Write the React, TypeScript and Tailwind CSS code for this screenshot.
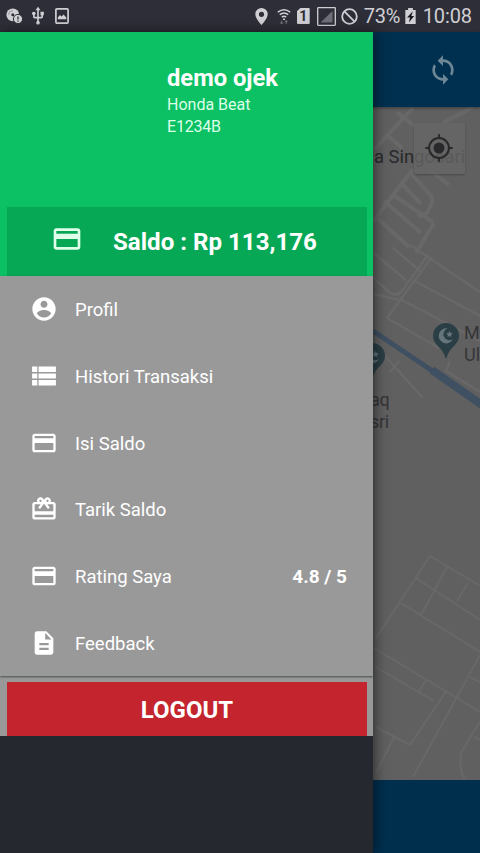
import type { ComponentType } from "react";
import {
  MdCardGiftcard,
  MdCreditCard,
  MdDescription,
  MdLoop,
  MdPlace,
  MdUsb,
} from "react-icons/md";

interface IconProps {
  className?: string;
}

interface MenuItem {
  label: string;
  icon: ComponentType<IconProps>;
  value?: string;
}

const AccountIcon = ({ className }: IconProps) => (
  <svg viewBox="0 0 24 24" fill="currentColor" className={className}>
    <path d="M12 2C6.48 2 2 6.48 2 12s4.48 10 10 10 10-4.48 10-10S17.52 2 12 2zm0 3c1.66 0 3 1.34 3 3s-1.34 3-3 3-3-1.34-3-3 1.34-3 3-3zm0 14.2c-2.5 0-4.71-1.28-6-3.22.03-1.99 4-3.08 6-3.08 1.99 0 5.97 1.09 6 3.08-1.29 1.94-3.5 3.22-6 3.22z" />
  </svg>
);

const ListIcon = ({ className }: IconProps) => (
  <svg viewBox="2.5 2 20 20" fill="currentColor" className={className}>
    <path d="M4 13.8h3.7v-3.6H4v3.6zm0 4.9h3.7v-3.9H4v3.9zM4 9.2h3.7V5.3H4v3.9zm4.6 4.6H21v-3.6H8.6v3.6zm0 4.9H21v-3.9H8.6v3.9zM8.6 5.3v3.9H21V5.3H8.6z" />
  </svg>
);

const menu: MenuItem[] = [
  { label: "Profil", icon: AccountIcon },
  { label: "Histori Transaksi", icon: ListIcon },
  { label: "Isi Saldo", icon: MdCreditCard },
  { label: "Tarik Saldo", icon: MdCardGiftcard },
  { label: "Rating Saya", icon: MdCreditCard, value: "4.8 / 5" },
  { label: "Feedback", icon: MdDescription },
];

const StatusBar = () => (
  <div className="flex h-8 shrink-0 items-center justify-between bg-[#2e2e38] pr-2 pl-[6px] text-[#cfcfd4]">
    <div className="flex items-center">
      <svg viewBox="0 0 17 16" className="h-4 w-[17px]">
        <circle cx="6.8" cy="6.8" r="6.4" fill="#cfcfd4" />
        <circle cx="6.8" cy="6.8" r="1.5" fill="#2e2e38" />
        <path d="M2.8 6.8a4 4 0 0 1 4-4" stroke="#8b8b93" fill="none" />
        <circle cx="12" cy="11" r="4.6" fill="#cfcfd4" stroke="#2e2e38" />
        <path d="M12 8.4v3.2M12 12.4v1.3" stroke="#2e2e38" strokeWidth="1.3" />
      </svg>
      <MdUsb className="ml-[5px] size-5" />
      <svg viewBox="0 0 14 16" className="ml-[7px] h-4 w-[14px]">
        <rect x="0.9" y="0.9" width="12.2" height="14.2" rx="1" fill="none" stroke="#cfcfd4" strokeWidth="1.7" />
        <path d="M2.8 11.3V9.5l2.2-2.4 1.6 1.5 2-2.1 2.7 3v1.8z" fill="#cfcfd4" />
      </svg>
    </div>
    <div className="flex items-center">
      <svg viewBox="0 0 13 17" className="h-[17px] w-[13px]">
        <path d="M6.5 0A6.2 6.2 0 0 0 .3 6.2C.3 10.500 6.500 17 6.500 17s6.200-6.500 6.200-10.800A6.200 6.200 0 0 0 6.500 0zm0 3.700a2.600 2.600 0 1 1 0 5.200 2.600 2.600 0 0 1 0-5.200z" fill="#cfcfd4" fillRule="evenodd" />
      </svg>
      <svg viewBox="0 0 14 17" className="ml-[9px] h-[17px] w-[14px]" fill="none" stroke="#cfcfd4" strokeWidth="1.5">
        <path d="M0.8 4.2q6.2-5 12.4 0M2.8 6.7q4.2-3.4 8.4 0M4.8 9.2q2.2-1.7 4.4 0" />
        <path d="M7 10.4v1.6" strokeWidth="2" />
        <path d="M4.6 12.5v3.5M3.2 14.4l1.4 1.6 1.4-1.6M9.2 16v-3.5M7.8 14.1l1.4-1.6 1.4 1.6" stroke="#777780" strokeWidth="1" />
      </svg>
      <span className="ml-[6px] flex h-4 w-[13px] items-center justify-center rounded-[1px] bg-[#cfcfd4] text-sm font-bold text-[#2e2e38] [clip-path:polygon(28%_0,100%_0,100%_100%,0_100%,0_22%)]">
        1
      </span>
      <svg viewBox="0 0 19 19" className="ml-[7px] size-[19px]">
        <rect x="0.7" y="0.7" width="17.6" height="17.6" rx="0.5" fill="none" stroke="#cfcfd4" strokeWidth="1.3" />
        <path d="M3.5 15.5L15.5 4v11.5z" fill="#70707a" />
      </svg>
      <svg viewBox="0 0 17 17" className="ml-[5px] size-[17px]" fill="none" stroke="#cfcfd4" strokeWidth="1.8">
        <circle cx="8.5" cy="8.5" r="7.3" />
        <path d="M3.4 3.4l10.2 10.2" />
      </svg>
      <span className="ml-[6px] w-[37px] text-[20px] leading-8 tracking-[-0.2px]">73%</span>
      <svg viewBox="0 0 11 17" className="ml-[4px] h-4 w-[11px]">
        <path d="M0 2h3V0h5v2h3v15H0z" fill="#cfcfd4" />
        <path d="M8 3.5L1.8 10.2h3.2L3.8 15.5l5.6-7H6.4z" fill="#17171d" />
      </svg>
      <span className="ml-[7px] text-[20px] leading-8 tracking-[-0.1px]">10:08</span>
    </div>
  </div>
);

const MosquePin = ({ className }: IconProps) => (
  <svg viewBox="0 0 26 36" className={className}>
    <path d="M13 0A13 13 0 0 0 0 13c0 8 8 11 11 18l2 5 2-5c3-7 11-10 11-18A13 13 0 0 0 13 0z" fill="#2a3f45" />
    <path d="M14.5 5.5a7.5 7.5 0 1 0 5.5 10.5A6 6 0 1 1 14.5 5.5z" fill="#66757a" />
    <path d="M16.5 8l1 2 2.2.3-1.6 1.6.4 2.2-2-1.1-2 1.1.4-2.2-1.6-1.6 2.2-.3z" fill="#66757a" />
  </svg>
);

const MapView = () => (
  <div className="relative flex-1 overflow-hidden bg-[#606060] text-[#29292b]">
    <svg viewBox="0 107 480 673" className="h-full w-full" fill="none" stroke="#686868" strokeWidth="2.5">
      <g strokeWidth="4">
        <path d="M374 150L413 108M397 112l17 14M386 134l16 14M443 123l30-16" />
        <path d="M410 172l21 24q3 4 0 9l-4 8-9 4M373 222l20-27 20-26M393 195l40 27M384 201l37 32M402 184l19 20M376 217l33 30M434 223l-18 30M430 170l19 15" />
      </g>
      <path d="M374 253l33 28M393 248l27 23M410 245l70 47M413 280l67 36M400 299l80 42M387 318l52 30M432 257l-45 61M374 278l16 15q6 4 12-2l26-36M374 294l26 6" />
      <path d="M377 347l46 51M399 361l-9 11M450 361l-4 10 34 21" />
      <path d="M373 331L434 372" stroke="#3e5062" strokeWidth="5" />
      <path d="M432 370L482 405" stroke="#3e5062" strokeWidth="8" />
      <g stroke="#686868" strokeWidth="2">
        <path d="M376 638l54-82 50 30M416 578l64 42M401 603l79 49M374 648l106 64M374 666l60 35M447 567l-26 48M468 583l-11 18" />
        <path d="M480 655L413 777M447 690L410 745 376 727M426 680l-7 12M394 737l-18 36M470 677l10 5M480 721l-19 32q-2 18 4 27M474 737l6 3" />
      </g>
    </svg>
    <p className="absolute top-[36px] left-[374px] text-[18.4px] whitespace-nowrap">a Singosari</p>
    <p className="absolute top-[215px] left-[464px] text-[18px] leading-[22px] text-[#353538]">
      M
      <br />
      Ul
    </p>
    <p className="absolute top-[282px] left-[370px] text-[18px] leading-[22px] tracking-[-0.3px] text-[#353538]">
      aq
      <br />
      sri
    </p>
    <MosquePin className="absolute top-[216px] left-[433px] h-9 w-[26px]" />
    <MosquePin className="absolute top-[236px] left-[359px] h-9 w-[26px]" />
    <div className="absolute top-[16px] left-[414px] flex size-[51px] items-center justify-center rounded-[2px] bg-[#666666]/80 pr-[2px] pb-[2px] shadow-[0_1px_2px_rgba(0,0,0,0.25)]">
      <svg viewBox="0 0 28 28" className="size-7" fill="none" stroke="#29292b" strokeWidth="2">
        <circle cx="14" cy="14" r="9.9" />
        <circle cx="14" cy="14" r="5.5" fill="#29292b" stroke="none" />
        <path d="M14 0.3v4M14 23.7v4M0.3 14h4M23.7 14h4" />
      </svg>
    </div>
  </div>
);

const Drawer = () => (
  <div className="absolute top-8 bottom-0 left-0 z-20 flex w-[373px] flex-col bg-[#262830] text-white shadow-[2px_0_12px_rgba(0,0,0,0.5)]">
    <div className="flex h-[244px] flex-col justify-between bg-[#0bc163] pr-[6px] pl-[7px]">
      <div className="pt-[31px] pl-[160px]">
        <h1 className="mb-px text-[23.7px] leading-[30px] font-bold">demo ojek</h1>
        <p className="text-base leading-[22px] text-[#dcffe9]">Honda Beat</p>
        <p className="text-base leading-[22px] tracking-[-0.2px] text-[#dcffe9]">E1234B</p>
      </div>
      <div className="flex h-[69px] items-center bg-[#07a855] pl-[44px]">
        <MdCreditCard className="-mt-[6px] size-8 text-[#e0ffea]" />
        <p className="ml-[30px] text-[24.1px] leading-8 font-bold">Saldo : Rp 113,176</p>
      </div>
    </div>
    <div className="bg-[#999999]">
      <div className="h-[400px] shadow-[0_1px_2px_rgba(50,60,60,0.8)]">
        {menu.map(({ label, icon: Icon, value }) => (
          <div key={label} className="flex h-[66.66px] items-center pr-[26px] pl-[30px]">
            <Icon className="size-7" />
            <p className="ml-[17px] pt-1 text-[18.5px]">{label}</p>
            {value && <p className="ml-auto pt-[3px] text-[19px] font-bold">{value}</p>}
          </div>
        ))}
      </div>
      <div className="pt-[6px] pr-[6px] pl-[7px]">
        <button className="flex h-[54px] w-full items-center justify-center bg-[#c4242d] pt-[2px] text-2xl font-bold">
          LOGOUT
        </button>
      </div>
    </div>
  </div>
);

const App = () => {
  return (
    <div className="relative flex h-[853px] w-[480px] flex-col overflow-hidden font-[Roboto,sans-serif]">
      <StatusBar />
      <div className="z-10 flex h-[75px] shrink-0 items-center justify-end bg-[#00304f] pr-[21px] shadow-[0_1px_3px_rgba(0,0,0,0.4)]">
        <MdLoop className="size-8 text-[#6e8796]" />
      </div>
      <MapView />
      <div className="h-[73px] shrink-0 bg-[#002f4e]" />
      <Drawer />
    </div>
  );
};

export default App;
